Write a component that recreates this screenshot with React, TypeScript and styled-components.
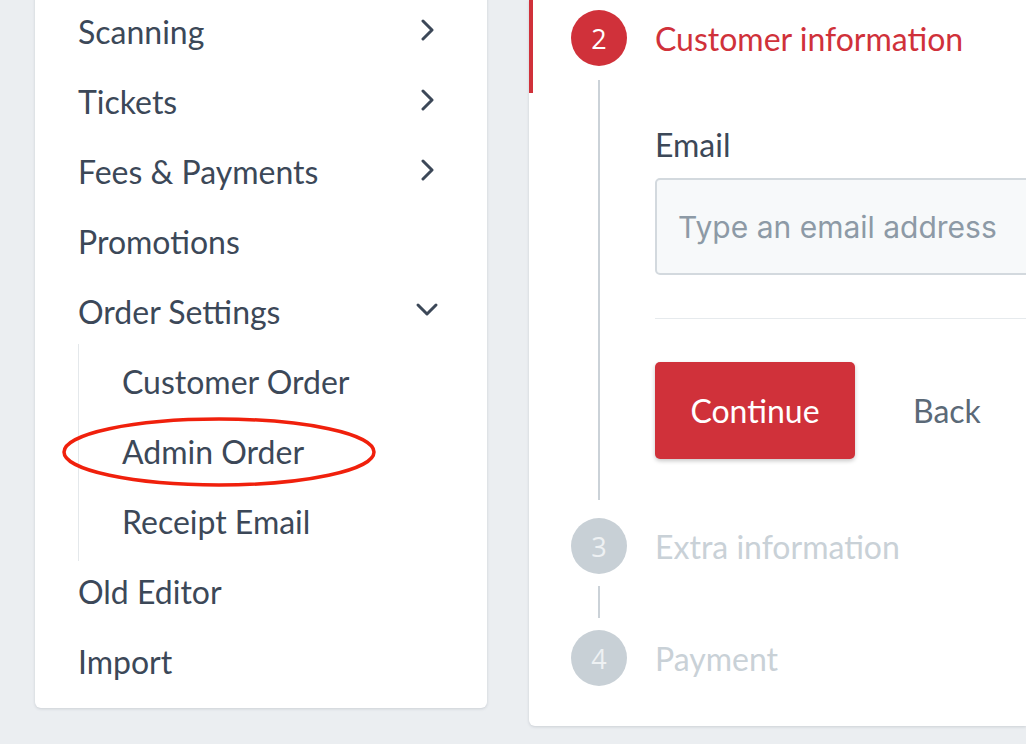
import React from "react";
import styled, { createGlobalStyle } from "styled-components";

const Global = createGlobalStyle`
  html, body { margin: 0; padding: 0; }
  body {
    background: #ebeef1;
    font-family: Lato, "Open Sans", sans-serif;
    overflow: hidden;
    width: 1026px;
    height: 744px;
  }
`;

const Page = styled.div`
  display: flex;
  align-items: flex-start;
  gap: 42px;
  padding-left: 35px;
  width: 1026px;
  box-sizing: border-box;
  overflow: hidden;
`;

const SideCard = styled.nav`
  flex: none;
  width: 452px;
  margin-top: -4px;
  background: #fff;
  border-radius: 0 0 6px 6px;
  box-shadow: 0 1px 3px rgba(60, 72, 88, 0.18);
  padding: 0 48px 12px 43px;
  box-sizing: border-box;
`;

const MenuRow = styled.div`
  display: flex;
  align-items: center;
  justify-content: space-between;
  height: 70px;
  font-size: 32px;
  color: #3c4858;
  position: relative;
`;

const SubList = styled.div`
  border-left: 1px solid #e4e8eb;
  padding-left: 43px;
  margin: -2px 0 -5px;
  padding-top: 2px;
  padding-bottom: 5px;
`;

const Chevron = styled.svg`
  width: 24px;
  height: 24px;
  flex: none;
`;

const Ring = styled.svg`
  position: absolute;
  left: -61px;
  top: 0;
  width: 316px;
  height: 72px;
  pointer-events: none;
`;

const MainCard = styled.section`
  flex: 1;
  min-width: 0;
  overflow: hidden;
  margin-bottom: 4px;
  background: #fff;
  border-radius: 0 0 0 6px;
  box-shadow: 0 1px 3px rgba(60, 72, 88, 0.18);
  padding: 0 0 40px 42px;
  box-sizing: border-box;
`;

const Step = styled.div<{ $active?: boolean }>`
  display: flex;
  gap: 28px;
  position: relative;
  padding-top: ${(p) => (p.$active ? "10px" : "0")};
  &::before {
    content: "";
    display: ${(p) => (p.$active ? "block" : "none")};
    position: absolute;
    left: -42px;
    top: 0;
    width: 4px;
    height: 93px;
    background: #d0313a;
  }
`;

const Rail = styled.div`
  width: 56px;
  flex: none;
  display: flex;
  flex-direction: column;
  align-items: center;
`;

const Circle = styled.div<{ $active?: boolean }>`
  width: 56px;
  height: 56px;
  border-radius: 50%;
  background: ${(p) => (p.$active ? "#d0313a" : "#c8d0d6")};
  color: ${(p) => (p.$active ? "#fff" : "#eef1f3")};
  font-family: "Open Sans", sans-serif;
  font-size: 27px;
  display: flex;
  align-items: center;
  justify-content: center;
  flex: none;
`;

const Connector = styled.div<{ $top: number; $bottom: number }>`
  width: 2px;
  flex: 1;
  background: #cbd2d8;
  margin: ${(p) => p.$top}px 0 ${(p) => p.$bottom}px;
`;

const StepBody = styled.div<{ $gap?: number }>`
  flex: 1;
  min-width: 0;
  padding-bottom: ${(p) => p.$gap ?? 0}px;
`;

const StepTitle = styled.div<{ $active?: boolean }>`
  height: 56px;
  display: flex;
  align-items: center;
  font-size: 32px;
  white-space: nowrap;
  color: ${(p) => (p.$active ? "#d0313a" : "#c9d1d7")};
`;

const Label = styled.div`
  margin-top: 60px;
  font-size: 32px;
  line-height: 38px;
  color: #3c4858;
`;

const Input = styled.input`
  display: block;
  box-sizing: border-box;
  margin-top: 14px;
  width: calc(100% + 40px);
  height: 97px;
  border: 2px solid #d3d9de;
  border-radius: 5px;
  background: #f7f9fa;
  padding: 0 21px;
  font-family: Inter, "Open Sans", sans-serif;
  font-size: 30px;
  outline: none;
  &::placeholder {
    color: #8d9aa6;
  }
`;

const Divider = styled.hr`
  border: none;
  height: 1px;
  background: #e6eaed;
  margin: 43px 0 0;
`;

const Actions = styled.div`
  display: flex;
  align-items: center;
  gap: 58px;
  margin-top: 43px;
  padding-bottom: 59px;
`;

const PrimaryButton = styled.button`
  width: 200px;
  height: 97px;
  border: none;
  border-radius: 5px;
  background: #d0313a;
  color: #fff;
  font-family: Lato, sans-serif;
  font-size: 32px;
  box-shadow: 0 2px 4px rgba(0, 0, 0, 0.22);
`;

const TextButton = styled.button`
  border: none;
  background: none;
  padding: 0;
  font-family: Lato, sans-serif;
  font-size: 32px;
  color: #5b6977;
`;

const Right = () => (
  <Chevron viewBox="0 0 24 24">
    <path d="M8 2 L17 11 L8 20" fill="none" stroke="#3c4858" strokeWidth="3" strokeLinecap="round" strokeLinejoin="round" />
  </Chevron>
);

const Down = () => (
  <Chevron viewBox="0 0 24 24">
    <path d="M3 6 L12 15 L21 6" fill="none" stroke="#3c4858" strokeWidth="3" strokeLinecap="round" strokeLinejoin="round" />
  </Chevron>
);

export default function App() {
  return (
    <>
      <Global />
      <Page>
        <SideCard>
          <MenuRow>Scanning<Right /></MenuRow>
          <MenuRow>Tickets<Right /></MenuRow>
          <MenuRow>Fees &amp; Payments<Right /></MenuRow>
          <MenuRow>Promotions</MenuRow>
          <MenuRow>Order Settings<Down /></MenuRow>
          <SubList>
            <MenuRow>Customer Order</MenuRow>
            <MenuRow>
              Admin Order
              <Ring viewBox="0 0 316 72">
                <ellipse cx="158" cy="36" rx="155" ry="33" fill="none" stroke="#f0200c" strokeWidth="3.5" />
              </Ring>
            </MenuRow>
            <MenuRow>Receipt Email</MenuRow>
          </SubList>
          <MenuRow>Old Editor</MenuRow>
          <MenuRow>Import</MenuRow>
        </SideCard>
        <MainCard>
          <Step $active>
            <Rail>
              <Circle $active>2</Circle>
              <Connector $top={14} $bottom={18} />
            </Rail>
            <StepBody>
              <StepTitle $active>Customer information</StepTitle>
              <Label>Email</Label>
              <Input placeholder="Type an email address" />
              <Divider />
              <Actions>
                <PrimaryButton>Continue</PrimaryButton>
                <TextButton>Back</TextButton>
              </Actions>
            </StepBody>
          </Step>
          <Step>
            <Rail>
              <Circle>3</Circle>
              <Connector $top={12} $bottom={12} />
            </Rail>
            <StepBody $gap={56}>
              <StepTitle>Extra information</StepTitle>
            </StepBody>
          </Step>
          <Step>
            <Rail>
              <Circle>4</Circle>
            </Rail>
            <StepBody>
              <StepTitle>Payment</StepTitle>
            </StepBody>
          </Step>
        </MainCard>
      </Page>
    </>
  );
}
